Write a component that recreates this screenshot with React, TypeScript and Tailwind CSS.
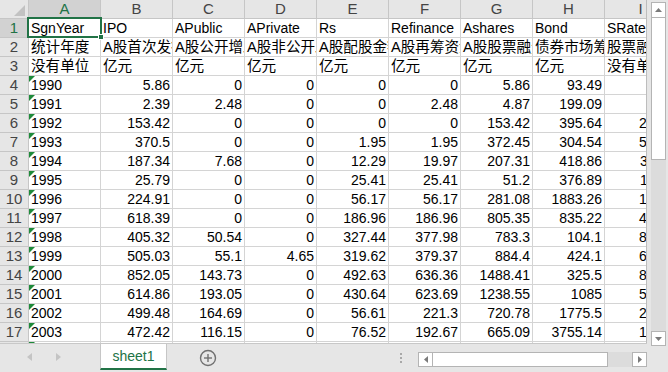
import React from "react";

const COLS = ["A", "B", "C", "D", "E", "F", "G", "H", "I"];

const TEXT_ROWS: string[][] = [
  ["SgnYear", "IPO", "APublic", "APrivate", "Rs", "Refinance", "Ashares", "Bond", "SRate"],
  ["统计年度", "A股首次发行", "A股公开增发", "A股非公开发行", "A股配股金额", "A股再筹资金额", "A股股票融资", "债券市场筹资", "股票融资比例"],
  ["没有单位", "亿元", "亿元", "亿元", "亿元", "亿元", "亿元", "亿元", "没有单位"],
];

const NUM_ROWS: string[][] = [
  ["1990", "5.86", "0", "0", "0", "0", "5.86", "93.49", "0.61"],
  ["1991", "2.39", "2.48", "0", "0", "2.48", "4.87", "199.09", "0.49"],
  ["1992", "153.42", "0", "0", "0", "0", "153.42", "395.64", "27.94"],
  ["1993", "370.5", "0", "0", "1.95", "1.95", "372.45", "304.54", "55.01"],
  ["1994", "187.34", "7.68", "0", "12.29", "19.97", "207.31", "418.86", "33.11"],
  ["1995", "25.79", "0", "0", "25.41", "25.41", "51.2", "376.89", "11.96"],
  ["1996", "224.91", "0", "0", "56.17", "56.17", "281.08", "1883.26", "12.99"],
  ["1997", "618.39", "0", "0", "186.96", "186.96", "805.35", "835.22", "49.09"],
  ["1998", "405.32", "50.54", "0", "327.44", "377.98", "783.3", "104.1", "88.27"],
  ["1999", "505.03", "55.1", "4.65", "319.62", "379.37", "884.4", "424.1", "67.59"],
  ["2000", "852.05", "143.73", "0", "492.63", "636.36", "1488.41", "325.5", "82.06"],
  ["2001", "614.86", "193.05", "0", "430.64", "623.69", "1238.55", "1085", "53.30"],
  ["2002", "499.48", "164.69", "0", "56.61", "221.3", "720.78", "1775.5", "28.88"],
  ["2003", "472.42", "116.15", "0", "76.52", "192.67", "665.09", "3755.14", "15.05"],
  ["2004", "353.46", "167.91", "0", "104.85", "272.76", "626.22", "3320.23", "15.87"],
];

function ErrTri() {
  return (
    <svg className="absolute left-0 top-0" width="6" height="6" viewBox="0 0 6 6">
      <polygon points="0,0 6,0 0,6" fill="#1e8a3a" />
    </svg>
  );
}

function HeaderRow() {
  return (
    <div className="flex h-[19px] shrink-0">
      <div className="relative w-[29px] h-[19px] shrink-0 bg-[#e6e6e6] border-r border-b border-[#c6c6c6]">
        <svg className="absolute left-[14px] top-[5px]" width="11" height="11" viewBox="0 0 11 11">
          <polygon points="11,0 11,11 0,11" fill="#c2c2c2" />
        </svg>
      </div>
      {COLS.map((c, i) => (
        <div
          key={c}
          className={
            i === 0
              ? "w-[72px] h-[19px] shrink-0 bg-[#d2d2d2] border-r border-b border-[#c6c6c6] flex items-center justify-center text-[15px] leading-[18px] text-[#217346]"
              : "w-[72px] h-[19px] shrink-0 bg-[#e6e6e6] border-r border-b border-[#c6c6c6] flex items-center justify-center text-[15px] leading-[18px] text-[#444444]"
          }
        >
          {c}
        </div>
      ))}
    </div>
  );
}

function DataRow({ n, cells, numeric, cjk }: { n: number; cells: string[]; numeric: boolean; cjk: boolean }) {
  return (
    <div className="flex h-[19px] shrink-0">
      <div
        className={
          n === 1
            ? "w-[29px] h-[19px] shrink-0 bg-[#d2d2d2] border-r border-b border-[#c6c6c6] flex items-center justify-center text-[15px] text-[#217346]"
            : "w-[29px] h-[19px] shrink-0 bg-[#e6e6e6] border-r border-b border-[#c6c6c6] flex items-center justify-center text-[15px] text-[#444444]"
        }
      >
        {n}
      </div>
      {cells.map((v, i) => {
        const right = numeric && i > 0;
        return (
          <div
            key={i}
            className={
              right
                ? "relative w-[72px] h-[19px] shrink-0 border-r border-b border-[#d4d4d4] overflow-hidden whitespace-nowrap flex items-end justify-end px-[2px] bg-white"
                : "relative w-[72px] h-[19px] shrink-0 border-r border-b border-[#d4d4d4] overflow-hidden whitespace-nowrap flex items-end justify-start px-[2px] bg-white"
            }
          >
            {numeric && i === 0 ? <ErrTri /> : null}
            <span className={cjk ? "leading-[17px] text-[14.6px] text-black" : "leading-[17px] text-black"}>{v}</span>
          </div>
        );
      })}
    </div>
  );
}

export default function App() {
  return (
    <div className="w-[668px] h-[372px] overflow-hidden flex bg-[#e6e6e6] font-['Liberation_Sans','Noto_Sans_CJK_SC',sans-serif] text-[14px]">
      <div className="w-[647px] flex flex-col shrink-0">
        <div className="relative h-[343px] overflow-hidden bg-white border-r border-[#bdbdbd] flex flex-col">
          <HeaderRow />
          {TEXT_ROWS.map((r, i) => (
            <DataRow key={i} n={i + 1} cells={r} numeric={false} cjk={i > 0} />
          ))}
          {NUM_ROWS.map((r, i) => (
            <DataRow key={i} n={i + 4} cells={r} numeric={true} cjk={false} />
          ))}
          <div className="absolute left-[27px] top-[17px] w-[75px] h-[21px] border-2 border-[#217346]" />
          <div className="absolute left-[98px] top-[34px] w-[6px] h-[6px] bg-[#217346] border border-white" />
        </div>
        <div className="flex-1 flex items-start border-t border-[#c8c8c8] bg-[#e6e6e6]">
          <div className="w-[100px] h-[26px] flex items-center">
            <svg className="ml-[27px]" width="6" height="8" viewBox="0 0 6 8">
              <polygon points="5,0 5,8 0,4" fill="#c4c4c4" />
            </svg>
            <svg className="ml-[23px]" width="6" height="8" viewBox="0 0 6 8">
              <polygon points="0,0 0,8 5,4" fill="#c4c4c4" />
            </svg>
          </div>
          <div className="w-[67px] h-[26px] bg-white border-x border-[#c6c6c6] border-b-2 border-b-[#217346] flex items-center justify-center text-[14px] text-[#217346]">
            sheet1
          </div>
          <div className="w-[82px] h-[28px] flex items-center justify-center">
            <svg width="18" height="18" viewBox="0 0 18 18">
              <circle cx="9" cy="9" r="7.5" fill="none" stroke="#707070" strokeWidth="1.4" />
              <line x1="9" y1="5" x2="9" y2="13" stroke="#707070" strokeWidth="1.4" />
              <line x1="5" y1="9" x2="13" y2="9" stroke="#707070" strokeWidth="1.4" />
            </svg>
          </div>
          <div className="w-[168px] h-[28px] flex items-center justify-end pr-[15px]">
            <div className="flex flex-col gap-[2px]">
              <div className="w-[2px] h-[2px] bg-[#a8a8a8]" />
              <div className="w-[2px] h-[2px] bg-[#a8a8a8]" />
              <div className="w-[2px] h-[2px] bg-[#a8a8a8]" />
            </div>
          </div>
          <div className="flex-1 h-[28px] flex items-center pt-[2px] pl-[1px]">
            <div className="w-[15px] h-[15px] bg-white border border-[#b4b4b4] flex items-center justify-center">
              <svg width="4" height="7" viewBox="0 0 4 7">
                <polygon points="4,0 4,7 0,3.5" fill="#7a7a7a" />
              </svg>
            </div>
            <div className="w-[175px] h-[15px] bg-white border-y border-r border-[#b4b4b4]" />
            <div className="flex-1 h-[15px] bg-[#dcdcdc]" />
            <div className="w-[15px] h-[15px] bg-white border border-[#b4b4b4] flex items-center justify-center">
              <svg width="4" height="7" viewBox="0 0 4 7">
                <polygon points="0,0 0,7 4,3.5" fill="#7a7a7a" />
              </svg>
            </div>
          </div>
        </div>
      </div>
      <div className="flex-1 flex flex-col pl-[4px] pt-[2px]">
        <div className="w-[15px] h-[16px] bg-white border border-[#b4b4b4] flex items-center justify-center">
          <svg width="7" height="4" viewBox="0 0 7 4">
            <polygon points="0,4 7,4 3.5,0" fill="#7a7a7a" />
          </svg>
        </div>
        <div className="w-[15px] h-[142px] bg-white border-x border-b border-[#b4b4b4]" />
        <div className="w-[15px] h-[171px] bg-[#dcdcdc]" />
        <div className="w-[15px] h-[15px] bg-white border border-[#b4b4b4] flex items-center justify-center">
          <svg width="7" height="4" viewBox="0 0 7 4">
            <polygon points="0,0 7,0 3.5,4" fill="#7a7a7a" />
          </svg>
        </div>
      </div>
    </div>
  );
}
